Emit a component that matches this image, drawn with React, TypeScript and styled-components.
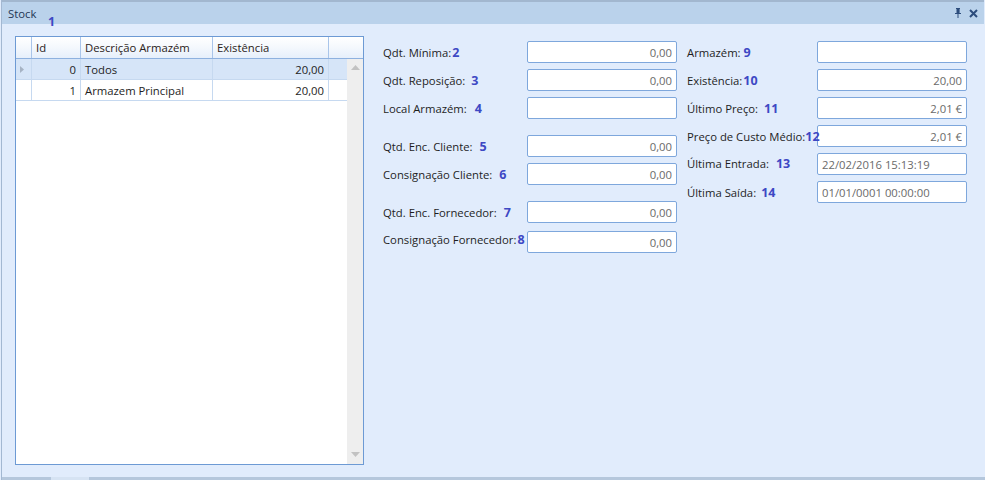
import React from "react";
import styled, { createGlobalStyle } from "styled-components";

const FS = "11.3px";

const Global = createGlobalStyle`
  html, body { margin: 0; padding: 0; background: #e1ecfc; }
  body { font-family: "Open Sans", "Noto Sans", Arial, sans-serif; font-size: ${FS}; color: #1e1e1e; }
  * { box-sizing: border-box; }
`;

const Window = styled.div`
  position: relative;
  width: 985px;
  height: 480px;
  display: flex;
  flex-direction: column;
  background: #e1ecfc;
  border-left: 1px solid #a3b8d2;
  margin-left: 1px;
  overflow: hidden;
`;

const TitleBar = styled.div`
  height: 24px;
  flex: none;
  display: flex;
  align-items: center;
  justify-content: space-between;
  background: #bad2eb;
  border-top: 2px solid #a2b7cf;
  padding: 0 6px 0 6px;
  margin-right: 2px;
`;

const Title = styled.span`
  font-size: ${FS};
  color: #1f3554;
`;

const TitleIcons = styled.div`
  display: flex;
  align-items: center;
  gap: 7px;
  color: #2c4c7c;
`;

const Body = styled.div`
  flex: 1;
  display: flex;
  align-items: flex-start;
  padding: 12px 0 0 13px;
`;

const Anno = styled.span<{ $left?: number; $top?: number }>`
  position: absolute;
  left: ${(p) => p.$left ?? 0}px;
  top: ${(p) => p.$top ?? 0}px;
  font-family: "Open Sans", Arial, sans-serif;
  font-weight: 700;
  font-size: 12.5px;
  line-height: 14px;
  color: #3d48c4;
  z-index: 2;
  white-space: nowrap;
`;

const GridBox = styled.div`
  width: 349px;
  height: 429px;
  border: 1px solid #6d9ad4;
  background: #fff;
  display: flex;
  flex-direction: column;
  flex: none;
`;

const HeaderRow = styled.div`
  height: 22px;
  display: grid;
  grid-template-columns: 16px 49px 132px 116px 1fr;
  background: linear-gradient(#ffffff, #f4f8fd 50%, #e6effb);
  border-bottom: 1px solid #8eb1df;
  flex: none;
`;

const HeadCell = styled.div<{ $last?: boolean }>`
  display: flex;
  align-items: center;
  padding-left: 4px;
  border-right: ${(p) => (p.$last ? "none" : "1px solid #a9c5ea")};
  font-size: ${FS};
  color: #2a2220;
  white-space: nowrap;
`;

const GridBody = styled.div`
  flex: 1;
  display: flex;
  min-height: 0;
`;

const Rows = styled.div`
  flex: 1;
  display: flex;
  flex-direction: column;
`;

const Row = styled.div<{ $sel?: boolean }>`
  height: 21px;
  display: grid;
  grid-template-columns: 16px 49px 132px 116px 1fr;
  background: ${(p) => (p.$sel ? "#d6e5f8" : "#ffffff")};
  border-bottom: 1px solid #c6d9f0;
`;

const Cell = styled.div<{ $right?: boolean }>`
  display: flex;
  align-items: center;
  justify-content: ${(p) => (p.$right ? "flex-end" : "flex-start")};
  padding: 0 4px;
  border-right: 1px solid #c6d9f0;
  white-space: nowrap;
  font-size: ${FS};
  color: #1e1e1e;
`;

const Indicator = styled.div`
  display: flex;
  align-items: center;
  justify-content: center;
  border-right: 1px solid #c6d9f0;
  padding-right: 4px;
`;

const Filler = styled.div``;

const ScrollBar = styled.div`
  width: 16px;
  flex: none;
  background: #eeeeee;
  display: flex;
  flex-direction: column;
  justify-content: space-between;
  align-items: center;
  padding: 6px 0 7px;
`;

const Form = styled.div`
  display: flex;
  gap: 10px;
  margin-left: 19px;
  padding-top: 5px;
`;

const Col = styled.div`
  display: flex;
  flex-direction: column;
`;

const FieldRow = styled.div<{ $mt?: number }>`
  display: flex;
  align-items: center;
  height: 22px;
  margin-top: ${(p) => p.$mt ?? 0}px;
`;

const Label = styled.div<{ $w: number; $shift?: number }>`
  width: ${(p) => p.$w}px;
  flex: none;
  display: flex;
  align-items: center;
  white-space: nowrap;
  font-size: ${FS};
  color: #1e1e1e;
  transform: translateY(${(p) => p.$shift ?? 0}px);
`;

const Num = styled.span<{ $gap: number }>`
  position: relative;
  margin-left: ${(p) => p.$gap}px;
  font-weight: 700;
  font-size: 12.5px;
  color: #3d48c4;
  z-index: 2;
`;

const TextBox = styled.input<{ $left?: boolean }>`
  width: 150px;
  height: 22px;
  border: 1px solid #7ea7dc;
  border-radius: 2px;
  background: #fff;
  font-family: "Open Sans", "Noto Sans", Arial, sans-serif;
  font-size: ${FS};
  color: #6a6a6a;
  text-align: ${(p) => (p.$left ? "left" : "right")};
  padding: 0 4px;
  outline: none;
`;

const BottomStrip = styled.div`
  height: 3px;
  flex: none;
  display: flex;
`;

const StripSeg = styled.div<{ $w?: number; $gap?: boolean }>`
  ${(p) => (p.$w ? `width: ${p.$w}px;` : "flex: 1;")}
  background: ${(p) => (p.$gap ? "#d6e3f3" : "#b5c7dc")};
`;

type F = { label: string; num: string; g: number; value: string; mt?: number; left?: boolean; shift?: number };

const col1: F[] = [
  { label: "Qdt. Mínima:", num: "2", g: 1, value: "0,00" },
  { label: "Qdt. Reposição:", num: "3", g: 6, value: "0,00", mt: 6 },
  { label: "Local Armazém:", num: "4", g: 8, value: "", mt: 6 },
  { label: "Qtd. Enc. Cliente:", num: "5", g: 7, value: "0,00", mt: 16 },
  { label: "Consignação Cliente:", num: "6", g: 7, value: "0,00", mt: 6 },
  { label: "Qtd. Enc. Fornecedor:", num: "7", g: 7, value: "0,00", mt: 16 },
  { label: "Consignação Fornecedor:", num: "8", g: 1, value: "0,00", mt: 8, shift: -3 },
];

const col2: F[] = [
  { label: "Armazém:", num: "9", g: 3, value: "" },
  { label: "Existência:", num: "10", g: 1, value: "20,00", mt: 6 },
  { label: "Último Preço:", num: "11", g: 6, value: "2,01 €", mt: 6 },
  { label: "Preço de Custo Médio:", num: "12", g: 0, value: "2,01 €", mt: 6 },
  { label: "Última Entrada:", num: "13", g: 7, value: "22/02/2016 15:13:19", mt: 6, left: true, shift: -1 },
  { label: "Última Saída:", num: "14", g: 5, value: "01/01/0001 00:00:00", mt: 6, left: true },
];

const rows = [
  { id: 0, desc: "Todos", ex: "20,00", sel: true },
  { id: 1, desc: "Armazem Principal", ex: "20,00", sel: false },
];

const Fields = ({ items, lw }: { items: F[]; lw: number }) => (
  <Col>
    {items.map((f) => (
      <FieldRow key={f.label} $mt={f.mt}>
        <Label $w={lw} $shift={f.shift}>
          {f.label}
          <Num $gap={f.g}>{f.num}</Num>
        </Label>
        <TextBox readOnly defaultValue={f.value} $left={f.left} />
      </FieldRow>
    ))}
  </Col>
);

export default function App() {
  return (
    <>
      <Global />
      <Window>
        <TitleBar>
          <Title>Stock</Title>
          <TitleIcons>
            <svg width="8" height="10" viewBox="0 0 8 10">
              <path d="M2 0h4v1H5.5v4H7v1H4.5v4h-1V6H1V5h1.5V1H2z" fill="currentColor" />
              <rect x="4.2" y="1" width="1" height="4" fill="currentColor" />
            </svg>
            <svg width="9" height="9" viewBox="0 0 9 9">
              <path d="M1 1l7 7M8 1L1 8" stroke="currentColor" strokeWidth="2" />
            </svg>
          </TitleIcons>
        </TitleBar>
        <Anno $left={46} $top={15}>1</Anno>
        <Body>
          <GridBox>
            <HeaderRow>
              <HeadCell />
              <HeadCell>Id</HeadCell>
              <HeadCell>Descrição Armazém</HeadCell>
              <HeadCell>Existência</HeadCell>
              <HeadCell $last>
                <Filler />
              </HeadCell>
            </HeaderRow>
            <GridBody>
              <Rows>
                {rows.map((r) => (
                  <Row key={r.id} $sel={r.sel}>
                    <Indicator>
                      {r.sel && (
                        <svg width="4" height="7" viewBox="0 0 4 7">
                          <path d="M0 0l4 3.5L0 7z" fill="#a6b3c4" />
                        </svg>
                      )}
                    </Indicator>
                    <Cell $right>{r.id}</Cell>
                    <Cell>{r.desc}</Cell>
                    <Cell $right>{r.ex}</Cell>
                    <Filler />
                  </Row>
                ))}
              </Rows>
              <ScrollBar>
                <svg width="9" height="5" viewBox="0 0 9 5">
                  <path d="M0 5L4.5 0 9 5z" fill="#c2c2c2" />
                </svg>
                <svg width="9" height="5" viewBox="0 0 9 5">
                  <path d="M0 0h9L4.5 5z" fill="#c2c2c2" />
                </svg>
              </ScrollBar>
            </GridBody>
          </GridBox>
          <Form>
            <Fields items={col1} lw={144} />
            <Fields items={col2} lw={130} />
          </Form>
        </Body>
        <BottomStrip>
          <StripSeg $w={49} />
          <StripSeg $w={38} $gap />
          <StripSeg />
        </BottomStrip>
      </Window>
    </>
  );
}
